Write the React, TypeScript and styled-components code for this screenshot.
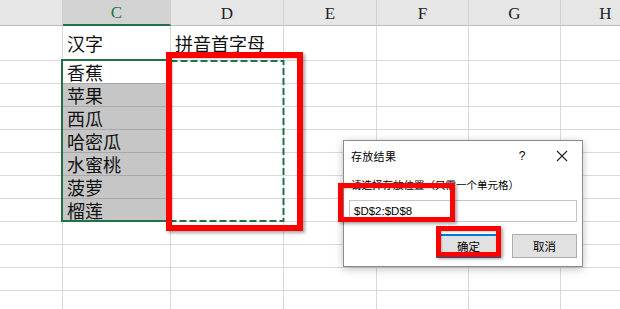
import * as React from 'react';
import styled, {createGlobalStyle} from 'styled-components';

const GlobalStyle = createGlobalStyle`
    html, body {
        margin: 0;
        padding: 0;
        background: #fff;
    }
`;

const Page = styled.div`
    position: relative;
    width: 620px;
    height: 309px;
    overflow: hidden;
    background: #fff;
`;

const Sheet = styled.div`
    display: grid;
    grid-template-columns: 63px 108px 113px 93px 92px 92px 90px;
    grid-template-rows: 26px 35px repeat(11, 23px);
`;

const HeaderCell = styled.div<{ $active?: boolean }>`
    box-sizing: border-box;
    display: flex;
    align-items: center;
    justify-content: center;
    background: ${(p) => (p.$active ? '#d2d2d2' : '#e6e6e6')};
    border-right: 1px solid #d0d0d0;
    border-bottom: ${(p) => (p.$active ? '2px solid #217346' : '1px solid #bdbdbd')};
    color: ${(p) => (p.$active ? '#217346' : '#222')};
    font-family: "Liberation Serif", "DejaVu Serif", serif;
    font-size: 17px;
    padding-top: 2px;
`;

const Cell = styled.div<{ $selected?: boolean; $dark?: boolean }>`
    box-sizing: border-box;
    display: flex;
    align-items: center;
    padding-left: 4px;
    background: ${(p) => (p.$selected ? '#c6c6c6' : '#fff')};
    border-right: 1px solid #d9d9d9;
    border-bottom: 1px solid ${(p) => (p.$dark ? '#a8a8a8' : '#d9d9d9')};
    font-family: "Noto Sans CJK SC", sans-serif;
    font-size: 18px;
    line-height: 1;
    color: #111;
    white-space: nowrap;
`;

const SelectionBox = styled.div`
    position: absolute;
    left: 61px;
    top: 59px;
    width: 110px;
    height: 163px;
    box-sizing: border-box;
    border: 2px solid #217346;
    pointer-events: none;
`;

const Ants = styled.svg`
    position: absolute;
    left: 169px;
    top: 60px;
    overflow: visible;
`;

const RedFrame = styled.div<{ $x: number; $y: number; $w: number; $h: number; $t?: number }>`
    position: absolute;
    left: ${(p) => p.$x}px;
    top: ${(p) => p.$y}px;
    width: ${(p) => p.$w}px;
    height: ${(p) => p.$h}px;
    box-sizing: border-box;
    border: ${(p) => p.$t ?? 5}px solid #ff0000;
    box-shadow: 2px 2px 3px rgba(0, 0, 0, 0.35), inset 1px 1px 2px rgba(0, 0, 0, 0.2);
    pointer-events: none;
`;

const Dialog = styled.div`
    position: absolute;
    left: 343px;
    top: 140px;
    width: 240px;
    height: 127px;
    box-sizing: border-box;
    border: 1px solid #8c8c8c;
    background: #fff;
    box-shadow: 0 2px 8px rgba(0, 0, 0, 0.25);
    display: flex;
    flex-direction: column;
    font-family: "Noto Sans CJK SC", "Microsoft YaHei", sans-serif;
    font-size: 11px;
    color: #000;
`;

const TitleBar = styled.div`
    height: 29px;
    display: flex;
    align-items: center;
    padding: 0 0 0 7px;
`;

const Title = styled.span`
    flex: 1;
    letter-spacing: 0.3px;
`;

const TitleButton = styled.span`
    width: 40px;
    display: flex;
    justify-content: center;
    align-items: center;
    font-family: "Liberation Sans", sans-serif;
    font-size: 12px;
`;

const Body = styled.div`
    flex: 1;
    display: flex;
    flex-direction: column;
    padding: 5px 5px 0 5px;
`;

const Label = styled.div`
    height: 20px;
    line-height: 20px;
    padding-left: 2px;
    font-size: 10.5px;
`;

const Field = styled.div`
    margin-top: 5px;
    height: 22px;
    box-sizing: border-box;
    border: 1px solid #c4c4c4;
    background: #fff;
    display: flex;
    align-items: center;
    padding-left: 4px;
    font-family: "Liberation Sans", sans-serif;
    font-size: 11.5px;
    color: #000;
`;

const ButtonRow = styled.div`
    display: flex;
    justify-content: flex-end;
    gap: 11px;
    margin-top: 12px;
`;

const Button = styled.div<{ $primary?: boolean }>`
    width: 65px;
    height: 24px;
    box-sizing: border-box;
    display: flex;
    align-items: center;
    justify-content: center;
    background: #e1e1e1;
    border: 1px solid ${(p) => (p.$primary ? '#0078d7' : '#adadad')};
    box-shadow: ${(p) => (p.$primary ? 'inset 0 0 0 1px #0078d7' : 'none')};
    font-size: 11.5px;
`;

const columns = ['', 'C', 'D', 'E', 'F', 'G', 'H'];

const rows: string[][] = [
    ['', '汉字', '拼音首字母'],
    ['', '香蕉', ''],
    ['', '苹果', ''],
    ['', '西瓜', ''],
    ['', '哈密瓜', ''],
    ['', '水蜜桃', ''],
    ['', '菠萝', ''],
    ['', '榴莲', ''],
];

while (rows.length < 12) rows.push([]);

export default function App() {
    return (
        <Page>
            <GlobalStyle/>
            <Sheet>
                {columns.map((c) => (
                    <HeaderCell key={'h' + c} $active={c === 'C'}>{c}</HeaderCell>
                ))}
                {rows.map((row, r) =>
                    columns.map((_, c) => {
                        const inSel = c === 1 && r >= 1 && r <= 7;
                        return (
                            <Cell
                                key={r + '-' + c}
                                $selected={inSel && r > 1}
                                $dark={inSel && r < 7}
                            >
                                {row[c] || ''}
                            </Cell>
                        );
                    })
                )}
            </Sheet>

            <SelectionBox/>
            <Ants width="116" height="162">
                <rect x="1.5" y="1" width="113" height="160" fill="none"
                      stroke="#217346" strokeWidth="2" strokeDasharray="7 3"/>
            </Ants>
            <RedFrame $x={166} $y={52} $w={137} $h={179} $t={6}/>

            <Dialog>
                <TitleBar>
                    <Title>存放结果</Title>
                    <TitleButton>?</TitleButton>
                    <TitleButton>
                        <svg width="12" height="12" viewBox="0 0 12 12">
                            <path d="M1 1 L11 11 M11 1 L1 11" stroke="#222" strokeWidth="1.1"/>
                        </svg>
                    </TitleButton>
                </TitleBar>
                <Body>
                    <Label>请选择存放位置（只需一个单元格）</Label>
                    <Field>$D$2:$D$8</Field>
                    <ButtonRow>
                        <Button $primary>确定</Button>
                        <Button>取消</Button>
                    </ButtonRow>
                </Body>
            </Dialog>
            <RedFrame $x={338} $y={183} $w={117} $h={39}/>
            <RedFrame $x={436} $y={226} $w={65} $h={31}/>
        </Page>
    );
}
